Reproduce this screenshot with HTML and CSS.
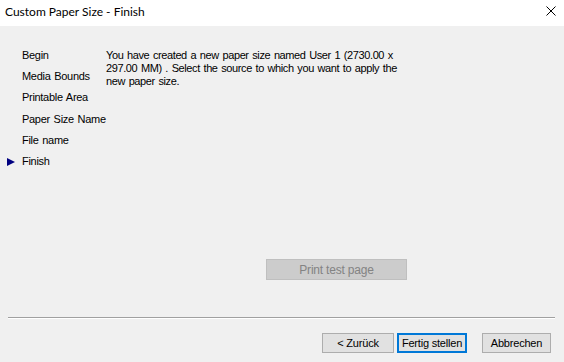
FILE: index.html
```html
<!DOCTYPE html>
<html lang="en">
<head>
    <meta charset="UTF-8" />
    <title>Custom Paper Size - Finish</title>
    <link rel="stylesheet" href="styles.css">
</head>
<body>
    <div class="window">
        <div class="titlebar">
            <span class="title">Custom Paper Size - Finish</span>
            <span class="close-button">
                <svg width="10" height="10" viewBox="0 0 10 10">
                    <path d="M0.5 0.5 L9.5 9.5 M9.5 0.5 L0.5 9.5" stroke="#000" stroke-width="1" fill="none"/>
                </svg>
            </span>
        </div>
        <div class="main">
            <ul class="steps">
                <li>Begin</li>
                <li>Media Bounds</li>
                <li>Printable Area</li>
                <li>Paper Size Name</li>
                <li>File name</li>
                <li class="current">Finish</li>
            </ul>
            <div class="content">
                <p>You have created a new paper size named User 1 (2730.00 x<br>297.00 MM) . Select the source to which you want to apply the<br>new paper size.</p>
                <div class="test-row">
                    <button class="win-button disabled" disabled>Print test page</button>
                </div>
            </div>
        </div>
        <div class="separator"></div>
        <div class="footer">
            <button class="win-button">&lt; Zurück</button>
            <button class="win-button default">Fertig stellen</button>
            <button class="win-button cancel">Abbrechen</button>
        </div>
    </div>
</body>
</html>
```

FILE: styles.css
```css
body {
    margin: 0;
    background-color: #f0f0f0;
    font-family: 'Liberation Sans', Arial, sans-serif;
    font-size: 11px;
    letter-spacing: -0.3px;
    word-spacing: 1px;
    color: #000;
}
.window {
    width: 564px;
    height: 362px;
    overflow: hidden;
}
.titlebar {
    height: 26px;
    background-color: #fff;
    display: flex;
    align-items: center;
    justify-content: space-between;
    padding: 0 8px 0 5px;
}
.title {
    font-family: Lato, 'Noto Sans', sans-serif;
    font-size: 12px;
    letter-spacing: 0;
    word-spacing: 0;
    color: #000;
    margin-top: -3px;
}
.close-button {
    display: flex;
    width: 10px;
    height: 10px;
    margin-top: -4px;
}

.main {
    display: flex;
    height: 272px;
    padding-top: 19px;
}
.steps {
    list-style: none;
    margin: 0;
    padding: 0 0 0 22px;
    width: 84px;
}
.steps li {
    height: 21.2px;
    line-height: 21px;
    position: relative;
    white-space: nowrap;
}
.steps li.current::before {
    content: '';
    position: absolute;
    left: -15px;
    top: 7px;
    border-left: 8px solid #000080;
    border-top: 4px solid transparent;
    border-bottom: 4px solid transparent;
}
.content {
    flex: 1;
    display: flex;
    flex-direction: column;
}
.content p {
    margin: 4px 0 0 0;
    line-height: 13px;
    letter-spacing: -0.4px;
    white-space: nowrap;
}
.test-row {
    margin-top: 171px;
    padding-left: 160px;
}

.win-button {
    font-family: 'Liberation Sans', Arial, sans-serif;
    font-size: 11px;
    letter-spacing: -0.2px;
    height: 20px;
    width: 72px;
    padding: 0;
    background-color: #e1e1e1;
    border: 1px solid #adadad;
    color: #000;
    box-sizing: border-box;
}
.win-button.default {
    width: 70px;
    border: 2px solid #0078d7;
}
.win-button.disabled {
    width: 141px;
    height: 21px;
    font-size: 12px;
    background-color: #cccccc;
    border-color: #bfbfbf;
    color: #838383;
}
.win-button.cancel {
    width: 69px;
}

.separator {
    margin: 0 9px 0 8px;
    border-top: 1px solid #a0a0a0;
    border-bottom: 1px solid #fff;
}
.footer {
    display: flex;
    justify-content: flex-end;
    padding: 14px 13px 0 0;
    gap: 3px;
}
.footer .cancel {
    margin-left: 12px;
}
```
